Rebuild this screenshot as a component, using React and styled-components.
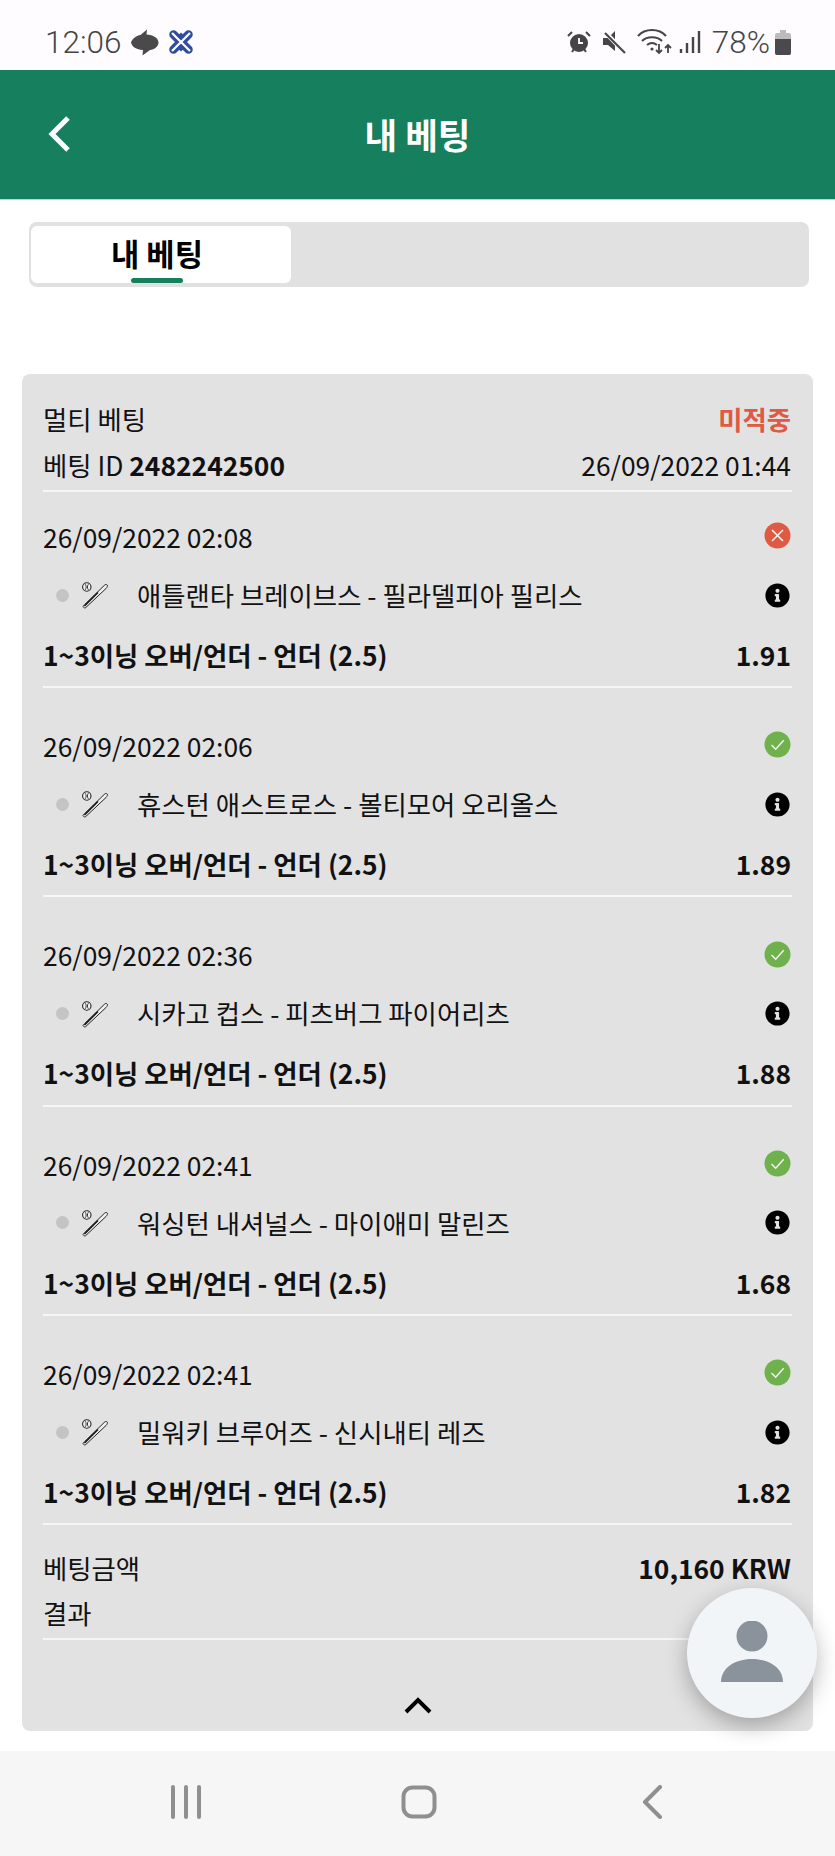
import React from "react";
import styled, { createGlobalStyle } from "styled-components";
import { FaInfoCircle } from "react-icons/fa";

const Global = createGlobalStyle`
  html, body { margin: 0; padding: 0; background: #fff; }
  * { box-sizing: border-box; }
  body { font-family: "Noto Sans CJK KR", "Noto Sans", sans-serif; color: #111; }
`;
const Page = styled.div`
  position: relative; width: 835px; height: 1856px; overflow: hidden;
  display: flex; flex-direction: column; background: #fff;
`;
const StatusBar = styled.div`
  height: 70px; padding: 14px 44px 0 45px; display: flex; align-items: center;
  justify-content: space-between; background: #fefcff; color: #454545;
  font-family: Roboto, sans-serif; font-weight: 300; font-size: 31.5px; flex-shrink: 0;
`;
const StatusGroup = styled.div`display: flex; align-items: center;`;
const StatusIcon = styled.svg`margin-left: ${p => p.$ml || 0}px; flex-shrink: 0;`;
const Percent = styled.span`margin-left: 11px;`;
const Header = styled.header`
  height: 130px; background: #157f5e; border-bottom: 1px solid #b9d8cc;
  display: flex; align-items: center; justify-content: center; position: relative;
  color: #fff; font-size: 35.5px; font-weight: 700; flex-shrink: 0; padding-bottom: 2px;
`;
const BackButton = styled.div`
  position: absolute; left: 46px; top: 43px; width: 28px; height: 42px; display: flex;
`;
const TabBar = styled.div`
  margin: 22px 26px 0 29px; height: 65px; background: #e1e1e1; border-radius: 8px; padding: 4px 2px;
  display: flex; flex-shrink: 0;
`;
const Tab = styled.div`
  position: relative; width: 260px; height: 57px; background: #fff; border-radius: 6px;
  display: flex; align-items: center; justify-content: center;
  font-size: 30.8px; font-weight: 700; color: #000; padding-bottom: 4px; padding-right: 8px;
`;
const TabMark = styled.span`
  position: absolute; left: 100px; bottom: 0; width: 52px; height: 5px; background: #157f5e; border-radius: 3px;
`;
const Card = styled.section`
  margin: 87px 22px 0; height: 1357px; background: #e2e2e2; border-radius: 8px;
  padding: 24px 21px 0; display: flex; flex-direction: column; flex-shrink: 0;
`;
const Row = styled.div`
  height: ${p => p.$h || 46}px; display: flex; align-items: center; justify-content: space-between;
  padding: 0 1px 4px 0; font-size: 26.4px; line-height: 1; white-space: nowrap; flex-shrink: 0;
`;
const Rule = styled.div`height: 2px; background: #f6f6f6; flex-shrink: 0;`;
const Strong = styled.b`font-weight: 700;`;
const Lost = styled.b`font-weight: 700; color: #df5a43;`;
const Leg = styled.article`
  margin-top: ${p => (p.$first ? 0 : 13.3)}px; height: 196px; padding-top: 27px;
  display: flex; flex-direction: column; border-bottom: 2px solid #f6f6f6; flex-shrink: 0;
`;
const LegDate = styled(Row)`height: 40px;`;
const TeamRow = styled(Row)`height: 50px; margin-top: 13px; justify-content: flex-start;`;
const MarketRow = styled(Row)`height: 40px; margin-top: 15px; font-weight: 700;`;
const Dot = styled.span`
  width: 13px; height: 13px; margin-left: 13px; border-radius: 50%; background: #c4c4c4; flex-shrink: 0;
`;
const Bat = styled.svg`width: 28px; height: 28px; margin-left: 12px; flex-shrink: 0;`;
const Teams = styled.span`margin-left: 28px; flex: 1;`;
const Info = styled(FaInfoCircle)`width: 25px; height: 25px; color: #000; margin-right: 1px;`;
const ResultMark = styled.svg`margin-bottom: 3px;`;
const Footer = styled.div`padding-top: 22px; display: flex; flex-direction: column;`;
const Collapse = styled.div`display: flex; justify-content: center; padding-top: 56px;`;
const Fab = styled.div`
  position: absolute; left: 687px; top: 1588px; width: 130px; height: 130px; border-radius: 50%;
  background: #f2f5f8; box-shadow: 0 8px 22px rgba(0,0,0,.28); display: flex; align-items: center; justify-content: center;
`;
const Nav = styled.nav`
  margin-top: 20px; flex: 1; background: #f6f6f6; position: relative;
`;
const NavSlot = styled.div`
  position: absolute; left: ${p => p.$x}px; top: 34px; display: flex;
`;

const Mark = ({ ok }) => (
  <ResultMark width="27" height="27" viewBox="0 0 27 27">
    <circle cx="13.5" cy="13.5" r="13" fill={ok ? "#6fb14c" : "#df5a43"} />
    {ok
      ? <path d="M7.5 14l4.2 4.2 8-9" fill="none" stroke="#f1f1f1" strokeWidth="1.5" />
      : <path d="M8 8l11 11M19 8L8 19" fill="none" stroke="#f6f6f6" strokeWidth="1.5" />}
  </ResultMark>
);
const BatIcon = () => (
  <Bat viewBox="0 0 28 28">
    <path d="M2 25.500l1.500 1.600 1.200-.5L25 7.500c1.200-1.200 1.800-2.600 1.200-3.500-.8-1-2-.5-3 .5L3.400 23.800z" fill="#efefef" stroke="#222" strokeWidth="1" />
    <path d="M3.500 25L17 11.500" stroke="#111" strokeWidth="1.500" />
    <circle cx="5.800" cy="6" r="4.200" fill="#f2f2f2" stroke="#222" strokeWidth="1.100" />
    <path d="M4.200 3.200c1.300 1.600 1.300 4 0 5.600M7.400 3.200c-1.300 1.600-1.300 4 0 5.600" fill="none" stroke="#222" strokeWidth=".9" />
  </Bat>
);

const legs = [
  ["26/09/2022 02:08", "애틀랜타 브레이브스 - 필라델피아 필리스", "1.91", false],
  ["26/09/2022 02:06", "휴스턴 애스트로스 - 볼티모어 오리올스", "1.89", true],
  ["26/09/2022 02:36", "시카고 컵스 - 피츠버그 파이어리츠", "1.88", true],
  ["26/09/2022 02:41", "워싱턴 내셔널스 - 마이애미 말린즈", "1.68", true],
  ["26/09/2022 02:41", "밀워키 브루어즈 - 신시내티 레즈", "1.82", true],
];

export default function App() {
  return (
    <Page>
      <Global />
      <StatusBar>
        <StatusGroup>
          <span>12:06</span>
          <StatusIcon $ml={8} width="29" height="27" viewBox="0 0 29 27">
            <path d="M1 13.500C2 10 6 6.500 10.500 6L17 .5l-.5 5c6.500.5 12 3.500 12 8 0 4-4 7-8.500 7.500L12.500 26.500l.5-5.500C6 20.500 2 18 1 13.500z" fill="#4a4a4a" />
          </StatusIcon>
          <StatusIcon $ml={10} width="24" height="24" viewBox="0 0 24 24">
            <path d="M4.500 4.500l15 15M19.500 4.500l-15 15" stroke="#2f4da0" strokeWidth="8.500" strokeLinecap="round" />
            <path d="M3 3l18 18M21 3L3 21" stroke="#fff" strokeWidth="2.200" />
            <path d="M12 9.500l3.500-3.500-3.500-3.500-3.500 3.500zM12 14.500l3.500 3.500-3.500 3.500-3.500-3.500z" fill="#2f4da0" />
          </StatusIcon>
        </StatusGroup>
        <StatusGroup>
          <StatusIcon width="24" height="24" viewBox="0 0 24 24">
            <circle cx="12" cy="13" r="9" fill="#454545" />
            <path d="M12 8v5h4" fill="none" stroke="#fff" strokeWidth="1.800" />
            <path d="M1 6l4-4M23 6l-4-4M5 22l2-3M19 22l-2-3" stroke="#454545" strokeWidth="2" />
          </StatusIcon>
          <StatusIcon $ml={11} width="24" height="24" viewBox="0 0 24 24">
            <path d="M1 8h5l7-7v20l-7-6H1z" fill="#454545" />
            <path d="M3 2l20 21" stroke="#fefcff" strokeWidth="4.500" />
            <path d="M3 3l20 20" stroke="#454545" strokeWidth="2.200" />
          </StatusIcon>
          <StatusIcon $ml={11} width="36" height="26" viewBox="0 0 36 26">
            <path d="M1 7c7-8 21-8 28 0M5 12c5-5 15-5 20 0M10 16c3-2.500 7-2.500 10 0" fill="none" stroke="#454545" strokeWidth="2" />
            <circle cx="15" cy="20" r="1.600" fill="#454545" />
            <path d="M22 15v9M19 21l3 3 3-3M31 24v-8M28 19l3-3 3 3" fill="none" stroke="#454545" strokeWidth="1.800" />
          </StatusIcon>
          <StatusIcon $ml={6} width="22" height="24" viewBox="0 0 22 24">
            <path d="M2 19v4M8 13v10M14 7v16M20 1v22" stroke="#454545" strokeWidth="2.400" />
          </StatusIcon>
          <Percent>78%</Percent>
          <StatusIcon $ml={5} width="16" height="25" viewBox="0 0 16 25">
            <path d="M5 0h6v3h3a2 2 0 0 1 2 2v18a2 2 0 0 1-2 2H2a2 2 0 0 1-2-2V5a2 2 0 0 1 2-2h3z" fill="#bcbcbc" />
            <path d="M0 9h16v14a2 2 0 0 1-2 2H2a2 2 0 0 1-2-2z" fill="#4a4a4e" />
          </StatusIcon>
        </StatusGroup>
      </StatusBar>
      <Header>
        <BackButton>
          <svg width="28" height="42" viewBox="0 0 28 42">
            <path d="M22 5L6 21l16 16" fill="none" stroke="#fff" strokeWidth="5" />
          </svg>
        </BackButton>
        내 베팅
      </Header>
      <TabBar>
        <Tab>내 베팅<TabMark /></Tab>
      </TabBar>
      <Card>
        <Row $h={46}><span>멀티 베팅</span><Lost>미적중</Lost></Row>
        <Row $h={46}><span>베팅 ID <Strong>2482242500</Strong></span><span>26/09/2022 01:44</span></Row>
        <Rule />
        {legs.map(([date, teams, odds, ok], i) => (
          <Leg key={i} $first={i === 0}>
            <LegDate><span>{date}</span><Mark ok={ok} /></LegDate>
            <TeamRow><Dot /><BatIcon /><Teams>{teams}</Teams><Info /></TeamRow>
            <MarketRow><span>1~3이닝 오버/언더 - 언더 (2.5)</span><span>{odds}</span></MarketRow>
          </Leg>
        ))}
        <Footer>
          <Row $h={46}><span>베팅금액</span><Strong>10,160 KRW</Strong></Row>
          <Row $h={45}><span>결과</span></Row>
          <Rule />
        </Footer>
        <Collapse>
          <svg width="30" height="18" viewBox="0 0 30 18">
            <path d="M3 16L15 4l12 12" fill="none" stroke="#000" strokeWidth="4" />
          </svg>
        </Collapse>
      </Card>
      <Nav>
        <NavSlot $x={170}>
          <svg width="32" height="34" viewBox="0 0 32 34">
            <path d="M3 2v30M16 2v30M29 2v30" stroke="#8f8f8f" strokeWidth="4" strokeLinecap="round" />
          </svg>
        </NavSlot>
        <NavSlot $x={401}>
          <svg width="36" height="34" viewBox="0 0 36 34">
            <rect x="2.500" y="2.500" width="31" height="29" rx="9" fill="none" stroke="#8f8f8f" strokeWidth="4" />
          </svg>
        </NavSlot>
        <NavSlot $x={641}>
          <svg width="22" height="34" viewBox="0 0 22 34">
            <path d="M19 2L4 17l15 15" fill="none" stroke="#8f8f8f" strokeWidth="4" strokeLinecap="round" strokeLinejoin="round" />
          </svg>
        </NavSlot>
      </Nav>
      <Fab>
        <svg width="64" height="64" viewBox="0 0 64 64">
          <circle cx="32" cy="15" r="15.500" fill="#8a939c" />
          <path d="M1 61c0-14 14-23 31-23s31 9 31 23z" fill="#8a939c" />
        </svg>
      </Fab>
    </Page>
  );
}
